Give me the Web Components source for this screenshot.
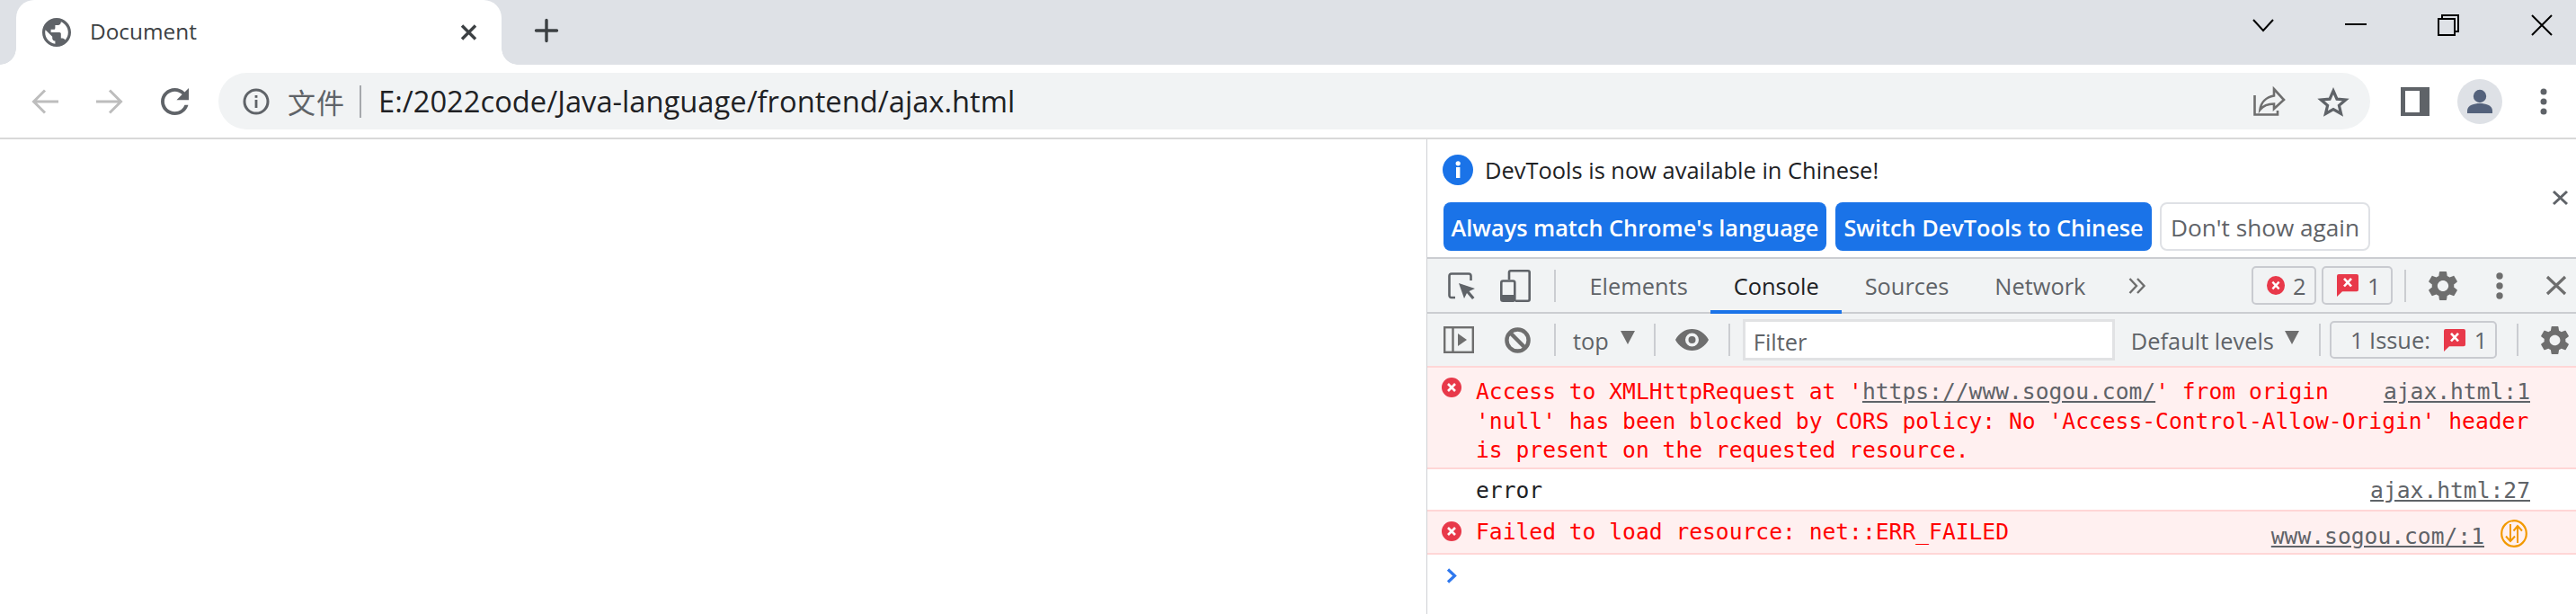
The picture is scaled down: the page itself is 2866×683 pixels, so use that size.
<!DOCTYPE html>
<html lang="en">
<head>
<meta charset="utf-8">
<title>Document</title>
<style>
  html, body { margin: 0; height: 100%; background: #fff; overflow: hidden; }
  body { font-family: "Open Sans", "Noto Sans CJK SC", sans-serif; }
  console-row div { display: block; }
</style>
</head>
<body>
<browser-window>
  <tab-strip slot="strip"></tab-strip>
  <nav-bar slot="nav" url="E:/2022code/Java-language/frontend/ajax.html"></nav-bar>
  <dev-tools slot="side">
    <info-bar></info-bar>
    <panel-tabs></panel-tabs>
    <console-bar></console-bar>
    <console-row kind="error" link="ajax.html:1" wrap>Access to XMLHttpRequest at '<u>https://www.sogou.com/</u>' from origin<div>'null' has been blocked by CORS policy: No 'Access-Control-Allow-Origin' header</div><div>is present on the requested resource.</div></console-row>
    <console-row link="ajax.html:27" plain>error</console-row>
    <console-row kind="error" link="www.sogou.com/:1" net>Failed to load resource: net::ERR_FAILED</console-row>
    <console-prompt></console-prompt>
  </dev-tools>
</browser-window>

<script>
'use strict';

const GEAR = 'M19.14,12.94c0.04-0.3,0.06-0.61,0.06-0.94c0-0.32-0.02-0.64-0.07-0.94l2.03-1.58c0.18-0.14,0.23-0.41,0.12-0.61 l-1.92-3.32c-0.12-0.22-0.37-0.29-0.59-0.22l-2.39,0.96c-0.5-0.38-1.03-0.7-1.62-0.94L14.4,2.81c-0.04-0.24-0.24-0.41-0.48-0.41 h-3.84c-0.24,0-0.43,0.17-0.47,0.41L9.25,5.35C8.66,5.59,8.12,5.92,7.63,6.29L5.24,5.33c-0.22-0.08-0.47,0-0.59,0.22L2.74,8.87 C2.62,9.08,2.66,9.34,2.86,9.48l2.03,1.58C4.84,11.36,4.8,11.69,4.8,12s0.02,0.64,0.07,0.94l-2.03,1.58 c-0.18,0.14-0.23,0.41-0.12,0.61l1.92,3.32c0.12,0.22,0.37,0.29,0.59,0.22l2.39-0.96c0.5,0.38,1.03,0.7,1.62,0.94l0.36,2.54 c0.05,0.24,0.24,0.41,0.48,0.41h3.84c0.24,0,0.44-0.17,0.47-0.41l0.36-2.54c0.59-0.24,1.13-0.56,1.62-0.94l2.39,0.96 c0.22,0.08,0.47,0,0.59-0.22l1.92-3.32c0.12-0.22,0.07-0.47-0.12-0.61L19.14,12.94z M12,15.6c-1.98,0-3.6-1.62-3.6-3.6 s1.62-3.6,3.6-3.6s3.6,1.62,3.6,3.6S13.98,15.6,12,15.6z';

// viewBox and inner markup of every icon
const ICONS = {
  globe: ['2 2 20 20', `<path fill="#5f6368" d="M12 2C6.48 2 2 6.48 2 12s4.48 10 10 10 10-4.48 10-10S17.52 2 12 2zm-1 17.93c-3.95-.49-7-3.85-7-7.93 0-.62.08-1.21.21-1.79L9 15v1c0 1.1.9 2 2 2v1.93zm6.9-2.54c-.26-.81-1-1.39-1.9-1.39h-1v-3c0-.55-.45-1-1-1H8v-2h2c.55 0 1-.45 1-1V7h2c1.1 0 2-.9 2-2v-.41c2.93 1.19 5 4.06 5 7.41 0 2.08-.8 3.97-2.1 5.39z"/>`],
  tabclose: ['0 0 19 18', `<path stroke="#3c4043" stroke-width="3.4" fill="none" d="M2 1.5L17 16.5M17 1.5L2 16.5"/>`],
  plus: ['0 0 26 26', `<path stroke="#3c4043" stroke-width="3.4" stroke-linecap="round" d="M13 1.5V24.5M1.5 13H24.5"/>`],
  chevdown: ['0 0 24 15', `<path stroke="#000" stroke-width="2" fill="none" d="M1 1L12 13L23 1"/>`],
  minimize: ['0 0 24 2', `<path stroke="#000" stroke-width="2" d="M0 1H24"/>`],
  restore: ['0 0 24 24', `<g stroke="#000" stroke-width="2" fill="none"><path d="M5 5V1H23V19H19"/><rect x="1" y="5" width="18" height="18"/></g>`],
  winclose: ['0 0 24 24', `<path stroke="#000" stroke-width="2" d="M1 1L23 23M23 1L1 23"/>`],
  back: ['0 0 30 28', `<path stroke="#bdbdbd" stroke-width="3" fill="none" d="M30 14H3M15 1.5L2.5 14L15 26.5"/>`],
  forward: ['0 0 30 28', `<path stroke="#bdbdbd" stroke-width="3" fill="none" d="M0 14H27M15 1.5L27.5 14L15 26.5"/>`],
  reload: ['4 4 16 16', `<path fill="#5f6368" d="M17.65 6.35C16.2 4.9 14.21 4 12 4c-4.42 0-7.99 3.58-7.99 8s3.57 8 7.99 8c3.73 0 6.84-2.55 7.73-6h-2.08c-.82 2.33-3.04 4-5.65 4-3.31 0-6-2.69-6-6s2.69-6 6-6c1.66 0 3.14.69 4.22 1.78L13 11h7V4l-2.35 2.35z"/>`],
  siteinfo: ['0 0 30 30', `<circle cx="15" cy="15" r="13" fill="none" stroke="#5f6368" stroke-width="3"/><rect x="13.6" y="13" width="2.8" height="9" fill="#5f6368"/><rect x="13.6" y="8" width="2.8" height="2.8" fill="#5f6368"/>`],
  share: ['0 0 36 32', `<g stroke="#6e6e6e" stroke-width="2.6" fill="none"><path d="M1.5 9V30.5H27V26"/><path d="M23 2L34 14L23 24V18.5C16 18.5 11 20.5 7.5 25C8.5 17 14 11 23 9.5Z"/></g>`],
  star: ['0 0 34 32', `<path fill="none" stroke="#5f6368" stroke-width="3.2" d="M17 4L21 13.2L30.8 14L23.4 20.4L25.6 29.5L17 24.6L8.4 29.5L10.6 20.4L3.2 14L13 13.2Z"/>`],
  sidepanel: ['0 0 32 32', `<path fill="#5f6368" fill-rule="evenodd" d="M0 0H32V32H0ZM5 4V28H21V4Z"/>`],
  person: ['0 0 50 50', `<circle cx="25" cy="25" r="25" fill="#dee1e6"/><circle cx="25" cy="19" r="7.2" fill="#54627c"/><path fill="#54627c" d="M11 38V35C11 29 19 27 25 27S39 29 39 35V38Z"/>`],
  dots: ['0 0 8 30', `<g fill="#5f6368"><circle cx="4" cy="4" r="3.5"/><circle cx="4" cy="15" r="3.5"/><circle cx="4" cy="26" r="3.5"/></g>`],
  info: ['0 0 34 34', `<circle cx="17" cy="17" r="17" fill="#1a73e8"/><rect x="15" y="14" width="4.4" height="12" fill="#fff"/><circle cx="17.2" cy="9.8" r="2.6" fill="#fff"/>`],
  barclose: ['0 0 17 16', `<path stroke="#5f6368" stroke-width="3" d="M1 1L16 15M16 1L1 15"/>`],
  inspect: ['0 0 30 30', `<path fill="none" stroke="#5f6368" stroke-width="2.6" d="M8 28H4Q1.5 28 1.5 25.5V4Q1.5 1.5 4 1.5H23Q25.5 1.5 25.5 4V9"/><path fill="#5f6368" d="M12 12L30 18L23.5 21L29.5 28L27 30L21 23L18 29Z"/>`],
  device: ['0 0 34 36', `<g fill="none" stroke="#5f6368" stroke-width="2.6"><path d="M10 11V3Q10 1.3 11.7 1.3H31Q32.7 1.3 32.7 3V33Q32.7 34.7 31 34.7H17"/><rect x="1.3" y="12.5" width="15" height="22.2" rx="2"/></g><rect x="1" y="28" width="15" height="7" fill="#5f6368"/>`],
  gear: ['2.6 2.4 18.8 19.2', `<path fill="#6e6e6e" d="${GEAR}"/>`],
  more: ['0 0 8 30', `<g fill="#6e6e6e"><circle cx="4" cy="4" r="3.7"/><circle cx="4" cy="15" r="3.7"/><circle cx="4" cy="26" r="3.7"/></g>`],
  dtclose: ['0 0 22 21', `<path stroke="#6e6e6e" stroke-width="3.2" d="M1 1L21 20M21 1L1 20"/>`],
  overflow: ['0 0 20 18', `<path fill="none" stroke="#6e6e6e" stroke-width="2.4" d="M1.5 1L9 9L1.5 17M10 1L17.5 9L10 17"/>`],
  errcircle: ['0 0 22 22', `<circle cx="11" cy="11" r="11" fill="#e8394a"/><path stroke="#fff" stroke-width="2.6" d="M7 7L15 15M15 7L7 15"/>`],
  issue: ['0 0 24 26', `<path fill="#e8394a" d="M2 0H22Q24 0 24 2V18Q24 20 22 20H6L0 26V2Q0 0 2 0Z"/><path stroke="#fff" stroke-width="2.6" d="M8 5L16 14M16 5L8 14"/>`],
  sidebar: ['0 0 34 30', `<g fill="none" stroke="#6e6e6e" stroke-width="2.4"><rect x="1.2" y="1.2" width="31.6" height="27.6"/><path d="M10.5 1V29"/></g><path fill="#6e6e6e" d="M16 8L26 15L16 22Z"/>`],
  block: ['0 0 30 30', `<circle cx="15" cy="15" r="12.5" fill="none" stroke="#6e6e6e" stroke-width="4.6"/><path stroke="#6e6e6e" stroke-width="4.6" d="M6 6L24 24"/>`],
  caret: ['0 0 16 15', `<path fill="#6e6e6e" d="M0 0H16L8 15Z"/>`],
  eye: ['0 0 37 24', `<path fill="#6e6e6e" fill-rule="evenodd" d="M0 12C4 4.5 11 0 18.5 0S33 4.5 37 12C33 19.5 26 24 18.5 24S4 19.5 0 12ZM18.5 4.5A7.5 7.5 0 1 0 18.5 19.5A7.5 7.5 0 1 0 18.5 4.5Z"/><circle cx="18.5" cy="12" r="4" fill="#6e6e6e"/>`],
  netsync: ['0 0 30 31', `<ellipse cx="15" cy="15.5" rx="13.8" ry="14.3" fill="none" stroke="#f29900" stroke-width="2.2"/><path fill="none" stroke="#f29900" stroke-width="2" d="M11 5V24M6 18.5L11 24L16 18.5M19 26V7M14.5 12.5L19 7L24 12.5"/>`],
  promptchev: ['0 0 12 17', `<path fill="none" stroke="#2f78ee" stroke-width="3.2" d="M2 1.5L9.5 8.5L2 15.5"/>`],
};

class UiIcon extends HTMLElement {
  connectedCallback() {
    const [w, h] = this.getAttribute('size').split(',');
    const [box, inner] = ICONS[this.getAttribute('name')];
    this.attachShadow({mode: 'open'}).innerHTML = `
      <style>:host { display: block; flex: none; line-height: 0; } svg { display: block; overflow: visible; }</style>
      <svg width="${w}" height="${h}" viewBox="${box}" preserveAspectRatio="none">${inner}</svg>`;
  }
}
customElements.define('ui-icon', UiIcon);

customElements.define('browser-window', class extends HTMLElement {
  constructor() {
    super();
    this.attachShadow({mode: 'open'}).innerHTML = `
      <style>
        :host { display: flex; flex-direction: column; width: 2866px; height: 683px; overflow: hidden; }
        .main { display: grid; grid-template-columns: 1587px 1279px; flex: 1; min-height: 0; border-top: 2px solid #d9d9d9; }
      </style>
      <slot name="strip"></slot>
      <slot name="nav"></slot>
      <div class="main"><div></div><slot name="side"></slot></div>`;
  }
});

customElements.define('tab-strip', class extends HTMLElement {
  constructor() {
    super();
    this.attachShadow({mode: 'open'}).innerHTML = `
      <style>
        :host { display: flex; height: 72px; background: #dee1e6; align-items: stretch; }
        .tab {
          position: relative; width: 540px; margin-left: 18px; background: #fff; border-radius: 20px 20px 0 0;
          display: flex; align-items: center; padding-left: 29px; box-sizing: border-box;
        }
        .tab::before, .tab::after {
          content: ''; position: absolute; bottom: 0; width: 18px; height: 18px;
          background: radial-gradient(circle at var(--c) 0, #dee1e6 17.5px, #fff 18px);
        }
        .tab::before { left: -18px; --c: 0; }
        .tab::after { right: -18px; --c: 100%; }
        .title { margin-left: 21px; padding-bottom: 3px; font-size: 24.4px; color: #3c4043; width: 412px; white-space: nowrap; }
        .new { margin: 21px 0 0 37px; }
        .win { margin-left: auto; display: flex; align-items: flex-start; padding-right: 26px; }
      </style>
      <div class="tab">
        <ui-icon name="globe" size="32,32"></ui-icon>
        <span class="title">Document</span>
        <ui-icon name="tabclose" size="19,18"></ui-icon>
      </div>
      <ui-icon class="new" name="plus" size="26,26"></ui-icon>
      <div class="win">
        <ui-icon name="chevdown" size="24,15" style="margin-top:21px"></ui-icon>
        <ui-icon name="minimize" size="24,2" style="margin:26px 0 0 79px"></ui-icon>
        <ui-icon name="restore" size="24,24" style="margin:16px 0 0 79px"></ui-icon>
        <ui-icon name="winclose" size="24,24" style="margin:16px 0 0 80px"></ui-icon>
      </div>`;
  }
});

customElements.define('nav-bar', class extends HTMLElement {
  connectedCallback() {
    this.attachShadow({mode: 'open'}).innerHTML = `
      <style>
        :host { display: flex; height: 81px; background: #fff; align-items: center; padding-left: 35px; box-sizing: border-box; }
        .omni {
          width: 2394px; height: 63px; margin-left: 33px; background: #f1f3f4; border-radius: 32px;
          display: flex; align-items: center; padding-left: 27px; box-sizing: border-box;
        }
        .scheme { margin-left: 20px; font: 31px "Noto Sans CJK SC", sans-serif; color: #5f6368; letter-spacing: 1px; white-space: nowrap; }
        .sep { width: 2px; height: 36px; margin-left: 16px; background: #a5a8ac; }
        .url { margin-left: 19px; font-size: 32.7px; color: #202124; white-space: nowrap; }
        .end { margin-left: auto; display: flex; align-items: center; padding-right: 24px; }
      </style>
      <ui-icon name="back" size="30,28"></ui-icon>
      <ui-icon name="forward" size="30,28" style="margin-left:42px"></ui-icon>
      <ui-icon name="reload" size="31,30" style="margin-left:42px"></ui-icon>
      <div class="omni">
        <ui-icon name="siteinfo" size="30,30"></ui-icon>
        <span class="scheme">文件</span>
        <span class="sep"></span>
        <span class="url">${this.getAttribute('url')}</span>
        <div class="end">
          <ui-icon name="share" size="36,32"></ui-icon>
          <ui-icon name="star" size="34,32" style="margin-left:36px"></ui-icon>
        </div>
      </div>
      <ui-icon name="sidepanel" size="32,32" style="margin-left:34px"></ui-icon>
      <ui-icon name="person" size="50,50" style="margin-left:31px"></ui-icon>
      <ui-icon name="dots" size="8,30" style="margin-left:42px"></ui-icon>`;
  }
});

customElements.define('dev-tools', class extends HTMLElement {
  constructor() {
    super();
    this.attachShadow({mode: 'open'}).innerHTML = `
      <style>
        :host { display: flex; flex-direction: column; border-left: 1px solid #cfd1d4; min-height: 0; box-sizing: border-box; }
      </style>
      <slot></slot>`;
  }
});

customElements.define('info-bar', class extends HTMLElement {
  constructor() {
    super();
    this.attachShadow({mode: 'open'}).innerHTML = `
      <style>
        :host { display: block; position: relative; height: 133px; box-sizing: border-box; padding: 17px 0 0 17px; border-bottom: 2px solid #cbcdd1; background: #fff; }
        .head { display: flex; align-items: center; height: 34px; gap: 13px; font-size: 25.45px; color: #202124; white-space: nowrap; }
        .btns { display: flex; gap: 10px; margin-top: 19px; margin-left: 1px; }
        button {
          height: 54px; padding: 2px 0 0; border-radius: 8px; border: 0; font: 600 25.3px "Open Sans", sans-serif;
          background: #1a73e8; color: #fff; white-space: nowrap;
        }
        button.plain { background: #fff; color: #5f6368; border: 2px solid #dfe1e5; font-weight: 500; font-size: 26.2px; }
        .x { position: absolute; right: 9px; top: 57px; }
      </style>
      <div class="head"><ui-icon name="info" size="34,34"></ui-icon><span>DevTools is now available in Chinese!</span></div>
      <div class="btns">
        <button style="width:426px">Always match Chrome's language</button>
        <button style="width:352px">Switch DevTools to Chinese</button>
        <button class="plain" style="width:234px;margin-left:-1px">Don't show again</button>
      </div>
      <ui-icon class="x" name="barclose" size="17,16"></ui-icon>`;
  }
});

customElements.define('panel-tabs', class extends HTMLElement {
  constructor() {
    super();
    this.attachShadow({mode: 'open'}).innerHTML = `
      <style>
        :host { display: flex; align-items: center; height: 61px; box-sizing: border-box; border-bottom: 2px solid #cbcdd1; background: #f1f3f4; padding-left: 23px; font-size: 25.4px; color: #5f6368; }
        .sep { width: 2px; height: 36px; background: #cbcdd1; flex: none; }
        .tab { height: 59px; line-height: 61px; padding: 0 25.5px; box-sizing: border-box; white-space: nowrap; }
        .tab.on { color: #202124; border-bottom: 4px solid #1a73e8; height: 61px; margin-bottom: -2px; }
        .badge { display: flex; align-items: center; height: 43px; box-sizing: border-box; border: 2px solid #c9cbd0; border-radius: 5px; flex: none; }
      </style>
      <ui-icon name="inspect" size="30,30"></ui-icon>
      <ui-icon name="device" size="34,36" style="margin-left:28px"></ui-icon>
      <span class="sep" style="margin:0 12px 0 26px"></span>
      <span class="tab">Elements</span>
      <span class="tab on">Console</span>
      <span class="tab">Sources</span>
      <span class="tab">Network</span>
      <ui-icon name="overflow" size="20,18" style="margin-left:22px"></ui-icon>
      <div class="badge" style="width:72px;margin-left:117px;padding-left:15px;gap:9px"><ui-icon name="errcircle" size="20,21"></ui-icon>2</div>
      <div class="badge" style="width:79px;margin-left:6px;padding-left:15px;gap:10px"><ui-icon name="issue" size="24,25"></ui-icon>1</div>
      <span class="sep" style="margin-left:13px"></span>
      <ui-icon name="gear" size="32,32" style="margin-left:25px"></ui-icon>
      <ui-icon name="more" size="8,30" style="margin-left:43px"></ui-icon>
      <ui-icon name="dtclose" size="22,21" style="margin-left:48px"></ui-icon>`;
  }
});

customElements.define('console-bar', class extends HTMLElement {
  constructor() {
    super();
    this.attachShadow({mode: 'open'}).innerHTML = `
      <style>
        :host { display: flex; align-items: center; height: 60px; box-sizing: border-box; border-bottom: 2px solid #cbcdd1; background: #f1f3f4; padding-left: 18px; font-size: 25.4px; color: #5f6368; white-space: nowrap; }
        .sep { width: 2px; height: 36px; background: #cbcdd1; flex: none; }
        .label { padding-top: 2px; }
        .filter { width: 414px; height: 46px; box-sizing: border-box; margin-left: 14px; padding-left: 9px; background: #fff; border: 3px solid #e1e2e4; line-height: 44px; flex: none; }
        .issues { display: flex; align-items: center; width: 186px; height: 42px; box-sizing: border-box; margin-left: 10px; padding-left: 21px; border: 2px solid #c9cbd0; border-radius: 5px; flex: none; }
      </style>
      <ui-icon name="sidebar" size="34,30"></ui-icon>
      <ui-icon name="block" size="29,29" style="margin-left:34px"></ui-icon>
      <span class="sep" style="margin-left:26px"></span>
      <span class="label" style="margin-left:19px">top</span>
      <ui-icon name="caret" size="16,15" style="margin:-6px 0 0 13px"></ui-icon>
      <span class="sep" style="margin-left:21px"></span>
      <ui-icon name="eye" size="37,24" style="margin-left:22px"></ui-icon>
      <span class="sep" style="margin-left:22px"></span>
      <div class="filter">Filter</div>
      <span class="label" style="margin-left:18px">Default levels</span>
      <ui-icon name="caret" size="16,15" style="margin:-6px 0 0 12px"></ui-icon>
      <span class="sep" style="margin-left:22px"></span>
      <div class="issues">1 Issue:<ui-icon name="issue" size="24,25" style="margin:0 10px 0 15px"></ui-icon>1</div>
      <span class="sep" style="margin-left:22px"></span>
      <ui-icon name="gear" size="31,31" style="margin-left:25px"></ui-icon>`;
  }
});

customElements.define('console-row', class extends HTMLElement {
  connectedCallback() {
    const link = this.getAttribute('link');
    const isError = this.getAttribute('kind') === 'error';
    const net = this.hasAttribute('net');
    this.attachShadow({mode: 'open'}).innerHTML = `
      <style>
        :host {
          display: grid; grid-template-columns: 54px 1fr; box-sizing: border-box; margin-top: -2px; position: relative;
          padding: 7px 51px 6px 0; font: 24.63px/32.5px "DejaVu Sans Mono", monospace; color: #202124;
          border-top: 2px solid transparent; border-bottom: 2px solid transparent;
        }
        :host([kind="error"]) { background: #fff0f0; border-color: #ffd6d6; color: #f00; }
        :host([wrap]) { padding: 11px 51px 2px 0; }
        :host([plain]) { padding: 8px 51px 5px 0; }
        .ic { padding: 4px 0 0 16px; }
        :host([wrap]) .ic { padding-top: 0; }
        .link { float: right; color: #5f6368; text-decoration: underline; margin-left: 36px; }
        ::slotted(u) { color: #5f6368; }
        :host([net]) { padding-right: 54px; }
        .net { float: right; margin: 2px 0 0 18px; }
        :host([net]) .link { position: relative; top: 5px; }
      </style>
      <div class="ic">${isError ? '<ui-icon name="errcircle" size="22,22"></ui-icon>' : ''}</div>
      <div class="msg">
        ${net ? '<ui-icon class="net" name="netsync" size="30,31"></ui-icon>' : ''}
        <span class="link">${link}</span><slot></slot>
      </div>`;
  }
});

customElements.define('console-prompt', class extends HTMLElement {
  constructor() {
    super();
    this.attachShadow({mode: 'open'}).innerHTML = `
      <style>:host { display: block; padding: 15px 0 0 21px; }</style>
      <ui-icon name="promptchev" size="12,17"></ui-icon>`;
  }
});
</script>
</body>
</html>
